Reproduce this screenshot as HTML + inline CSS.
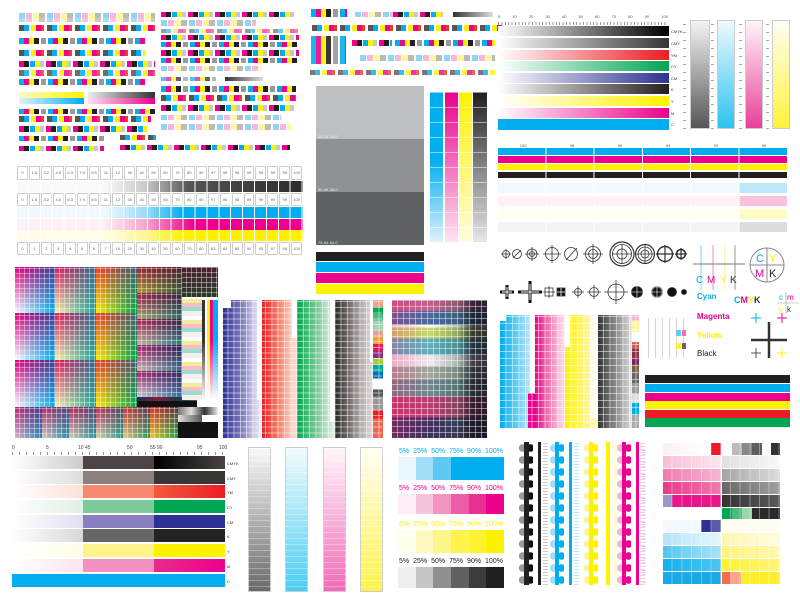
<!DOCTYPE html>
<html><head><meta charset="utf-8">
<style>
*{margin:0;padding:0;box-sizing:border-box}
body{width:800px;height:600px;background:#fff;position:relative;overflow:hidden;font-family:"Liberation Sans",sans-serif}
.a{position:absolute}
.s1{background:repeating-linear-gradient(90deg,#00aeef 0 5px,#ec008c 5px 10px,#fff200 10px 15px,#231f20 15px 20px,#fff 20px 22px,#9a9a9a 22px 27px,#fff 27px 29px)}
.s2{background:repeating-linear-gradient(90deg,#ec008c 0 5px,#231f20 5px 10px,#fff 10px 11px,#00aeef 11px 16px,#fff200 16px 21px,#c8c8c8 21px 25px,#fff 25px 27px)}
.s3{background:repeating-linear-gradient(90deg,#555 0 5px,#00aeef 5px 10px,#fff 10px 12px,#fff200 12px 17px,#ec008c 17px 22px,#ef3e23 22px 25px,#fff 25px 28px)}
.s4{background:repeating-linear-gradient(90deg,#8fd5f5 0 6px,#fff 6px 7px,#f8b7d6 7px 13px,#fff 13px 14px,#fff799 14px 20px,#bbb 20px 26px,#fff 26px 28px)}
.g{background-image:repeating-linear-gradient(90deg,transparent 0 4px,rgba(255,255,255,.45) 4px 5px),repeating-linear-gradient(0deg,transparent 0 4px,rgba(255,255,255,.45) 4px 5px)}
.t{position:absolute;overflow:hidden}
.t>i{position:absolute;inset:0;-webkit-mask-image:linear-gradient(to bottom,#000,transparent);mask-image:linear-gradient(to bottom,#000,transparent)}
.t>b{position:absolute;inset:0;background-image:repeating-linear-gradient(90deg,transparent 0 4px,rgba(255,255,255,.4) 4px 5px),repeating-linear-gradient(0deg,transparent 0 4px,rgba(255,255,255,.4) 4px 5px)}
.lbl{position:absolute;font-size:5px;color:#333}
.row{position:absolute;display:flex}
.row span{flex:1;border:1px solid #ccc;border-radius:1px;margin-right:1px;font-size:4px;color:#666;text-align:center;line-height:11px;background:#fff}
.pt{position:absolute;font-size:7px;display:flex;width:104px;justify-content:space-between}
</style></head><body>

<div class="a s4" style="left:19px;top:13px;width:136px;height:5px"></div>
<div class="a s4" style="left:19px;top:18px;width:136px;height:4px;opacity:.8"></div>
<div class="a s3" style="left:19px;top:25px;width:136px;height:6px"></div>
<div class="a s1" style="left:19px;top:38px;width:126px;height:6px"></div>
<div class="a s3" style="left:19px;top:50px;width:126px;height:6px"></div>
<div class="a s2" style="left:19px;top:61px;width:136px;height:6px"></div>
<div class="a s3" style="left:19px;top:70px;width:136px;height:6px;opacity:.85"></div>
<div class="a s1" style="left:19px;top:79px;width:126px;height:6px"></div>
<div class="a" style="left:19px;top:92px;width:65px;height:6px;background:linear-gradient(90deg,#fff9c4,#fff200)"></div>
<div class="a" style="left:88px;top:92px;width:67px;height:6px;background:linear-gradient(90deg,#eee,#333)"></div>
<div class="a" style="left:19px;top:98px;width:65px;height:6px;background:linear-gradient(90deg,#e0f4fc,#00aeef)"></div>
<div class="a" style="left:88px;top:98px;width:67px;height:6px;background:linear-gradient(90deg,#fde0ee,#ec008c)"></div>
<div class="a s1" style="left:19px;top:109px;width:136px;height:5px"></div>
<div class="a s3" style="left:19px;top:116px;width:132px;height:6px"></div>
<div class="a s2" style="left:19px;top:126px;width:128px;height:6px"></div>
<div class="a s1" style="left:19px;top:136px;width:85px;height:5px"></div>
<div class="a s2" style="left:19px;top:146px;width:85px;height:5px"></div>
<div class="a s3" style="left:120px;top:135px;width:36px;height:5px"></div>
<div class="a s2" style="left:120px;top:145px;width:170px;height:5px"></div>

<div class="a s2" style="left:161px;top:12px;width:134px;height:5px"></div>
<div class="a s4" style="left:161px;top:20px;width:95px;height:6px"></div>
<div class="a s3" style="left:161px;top:29px;width:138px;height:4px;opacity:.6"></div>
<div class="a s2" style="left:161px;top:35px;width:138px;height:5px"></div>
<div class="a s1" style="left:161px;top:42px;width:138px;height:5px"></div>
<div class="a s2" style="left:161px;top:50px;width:138px;height:6px"></div>
<div class="a s1" style="left:161px;top:58px;width:138px;height:5px"></div>
<div class="a s4" style="left:161px;top:66px;width:100px;height:5px"></div>
<div class="a" style="left:225px;top:77px;width:38px;height:4px;background:linear-gradient(90deg,#333,#ddd)"></div>
<div class="a s1" style="left:161px;top:77px;width:55px;height:4px;opacity:.7"></div>
<div class="a s1" style="left:161px;top:86px;width:135px;height:6px"></div>
<div class="a s3" style="left:161px;top:95px;width:135px;height:6px"></div>
<div class="a s2" style="left:161px;top:105px;width:135px;height:6px"></div>
<div class="a s4" style="left:161px;top:115px;width:120px;height:5px"></div>
<div class="a s4" style="left:161px;top:124px;width:130px;height:6px"></div>

<div class="a s1" style="left:311px;top:9px;width:36px;height:8px"></div>
<div class="a s4" style="left:355px;top:12px;width:38px;height:5px"></div>
<div class="a s2" style="left:393px;top:12px;width:50px;height:5px"></div>
<div class="a" style="left:453px;top:12px;width:40px;height:5px;background:linear-gradient(90deg,#333,#ddd)"></div>
<div class="a s3" style="left:312px;top:25px;width:190px;height:6px"></div>
<div class="a s1" style="left:311px;top:36px;width:35px;height:28px;opacity:.9"></div>
<div class="a s2" style="left:352px;top:40px;width:40px;height:6px"></div>
<div class="a s1" style="left:395px;top:40px;width:100px;height:6px"></div>
<div class="a s4" style="left:360px;top:55px;width:135px;height:6px"></div>
<div class="a s3" style="left:310px;top:70px;width:185px;height:5px;opacity:.8"></div>

<div class="a" style="left:316px;top:86px;width:108px;height:53px;background:#bebfc0"></div>
<div class="a" style="left:316px;top:139px;width:108px;height:53px;background:#8f9192"></div>
<div class="a" style="left:316px;top:192px;width:108px;height:53px;background:#5e6263"></div>
<div class="lbl" style="left:318px;top:134px;color:#eee;font-size:4px">25-19-19-0</div>
<div class="lbl" style="left:318px;top:187px;color:#eee;font-size:4px">50-39-38-0</div>
<div class="lbl" style="left:318px;top:240px;color:#eee;font-size:4px">75-64-64-0</div>
<div class="a" style="left:316px;top:252px;width:108px;height:9px;background:#231f20"></div>
<div class="a" style="left:316px;top:262px;width:108px;height:10px;background:#00aeef"></div>
<div class="a" style="left:316px;top:273px;width:108px;height:10px;background:#ec008c"></div>
<div class="a" style="left:316px;top:284px;width:108px;height:10px;background:#fff200"></div>

<div class="a" style="left:430px;top:92px;width:13px;height:150px;background:linear-gradient(#00aeef 0 45%,#dff3fc)"></div>
<div class="a" style="left:445px;top:92px;width:13px;height:150px;background:linear-gradient(#ec008c,#fde5f0)"></div>
<div class="a" style="left:459px;top:92px;width:13px;height:150px;background:linear-gradient(#fff200,#fffce0)"></div>
<div class="a" style="left:473px;top:92px;width:14px;height:150px;background:linear-gradient(#231f20,#e6e7e8)"></div>
<div class="a g" style="left:430px;top:92px;width:57px;height:150px;background-size:57px 15px;background-image:repeating-linear-gradient(0deg,transparent 0 14px,rgba(255,255,255,.5) 14px 15px)"></div>

<div class="a" style="left:498px;top:14px;width:170px;height:8px;font-size:4px;color:#555;display:flex;justify-content:space-between"><span>0</span><span>10</span><span>20</span><span>30</span><span>40</span><span>50</span><span>60</span><span>70</span><span>80</span><span>90</span><span>100</span></div>
<div class="a" style="left:498px;top:22px;width:170px;height:3px;background:repeating-linear-gradient(90deg,#999 0 1px,transparent 1px 3.4px)"></div>
<div class="a" style="left:498px;top:26px;width:171px;height:10px;background:linear-gradient(90deg,#fff,#000)"></div>
<div class="a" style="left:498px;top:38px;width:171px;height:10px;background:linear-gradient(90deg,#fff,#3a3535)"></div>
<div class="a" style="left:498px;top:50px;width:171px;height:10px;background:linear-gradient(90deg,#fff,#ed1c24)"></div>
<div class="a" style="left:498px;top:61px;width:171px;height:10px;background:linear-gradient(90deg,#fff,#00a651)"></div>
<div class="a" style="left:498px;top:73px;width:171px;height:10px;background:linear-gradient(90deg,#fff,#2e3192)"></div>
<div class="a" style="left:498px;top:84px;width:171px;height:10px;background:linear-gradient(90deg,#fff,#231f20)"></div>
<div class="a" style="left:498px;top:96px;width:171px;height:10px;background:linear-gradient(90deg,#fff,#fff200)"></div>
<div class="a" style="left:498px;top:108px;width:171px;height:10px;background:linear-gradient(90deg,#fff,#ec008c)"></div>
<div class="a" style="left:498px;top:119px;width:171px;height:11px;background:#00aeef"></div>
<div class="lbl" style="left:671px;top:29px;font-size:4px">CMYK</div>
<div class="lbl" style="left:671px;top:41px;font-size:4px">CMY</div>
<div class="lbl" style="left:671px;top:53px;font-size:4px">YM</div>
<div class="lbl" style="left:671px;top:64px;font-size:4px">CY</div>
<div class="lbl" style="left:671px;top:76px;font-size:4px">CM</div>
<div class="lbl" style="left:671px;top:87px;font-size:4px">K</div>
<div class="lbl" style="left:671px;top:99px;font-size:4px">Y</div>
<div class="lbl" style="left:671px;top:111px;font-size:4px">M</div>
<div class="lbl" style="left:671px;top:122px;font-size:4px">C</div>

<div class="a" style="left:690px;top:20px;width:20px;height:109px;border:1px solid #ccc;background:linear-gradient(#f5f5f5,#555)"></div>
<div class="a" style="left:717px;top:20px;width:18px;height:109px;border:1px solid #ccc;background:linear-gradient(#f0fafe,#2cc3f0)"></div>
<div class="a" style="left:745px;top:20px;width:18px;height:109px;border:1px solid #ccc;background:linear-gradient(#fff5fa,#e8409a)"></div>
<div class="a" style="left:772px;top:20px;width:18px;height:109px;border:1px solid #ccc;background:linear-gradient(#fffef5,#fff23a)"></div>
<div class="a" style="left:683px;top:20px;width:3px;height:109px;background:repeating-linear-gradient(0deg,#aaa 0 1px,transparent 1px 8px)"></div>
<div class="a" style="left:711px;top:20px;width:3px;height:109px;background:repeating-linear-gradient(0deg,#aaa 0 1px,transparent 1px 8px)"></div>
<div class="a" style="left:739px;top:20px;width:3px;height:109px;background:repeating-linear-gradient(0deg,#aaa 0 1px,transparent 1px 8px)"></div>
<div class="a" style="left:766px;top:20px;width:3px;height:109px;background:repeating-linear-gradient(0deg,#aaa 0 1px,transparent 1px 8px)"></div>

<div class="a" style="left:498px;top:143px;width:290px;height:5px;font-size:4px;color:#555;display:flex;justify-content:space-around"><span>100</span><span>98</span><span>96</span><span>94</span><span>92</span><span>90</span></div>
<div class="a" style="left:498px;top:148px;width:290px;height:30px;background:linear-gradient(#00aeef 0 7px,#fff 7px 8px,#ec008c 8px 15px,#fff 15px 16px,#fff200 16px 22px,#fff 22px 24px,#231f20 24px 30px)"></div>
<div class="a" style="left:498px;top:148px;width:290px;height:30px;background:repeating-linear-gradient(90deg,transparent 0 47.3px,#fff 47.3px 48.3px)"></div>
<div class="a" style="left:498px;top:183px;width:290px;height:10px;background:linear-gradient(90deg,#f3fafd 0 83%,#bfe7fa 83%)"></div>
<div class="a" style="left:498px;top:196px;width:290px;height:10px;background:linear-gradient(90deg,#fdf1f6 0 83%,#f8c2dc 83%)"></div>
<div class="a" style="left:498px;top:209px;width:290px;height:10px;background:linear-gradient(90deg,#fefef1 0 83%,#fffbc4 83%)"></div>
<div class="a" style="left:498px;top:222px;width:290px;height:10px;background:linear-gradient(90deg,#f4f4f4 0 83%,#dcdcdc 83%)"></div>
<div class="a" style="left:498px;top:183px;width:290px;height:49px;background:repeating-linear-gradient(90deg,transparent 0 47.3px,#fff 47.3px 48.3px)"></div>

<svg class="a" style="left:495px;top:238px" width="200" height="70" viewBox="495 238 200 70" fill="none" stroke="#333" stroke-width=".8">
<circle cx="506" cy="254" r="3.5"/><path d="M501 254h10M506 249v10"/>
<circle cx="517" cy="254" r="4.5"/><path d="M513 258l8-8"/>
<circle cx="532" cy="254" r="5"/><circle cx="532" cy="254" r="2.5"/><path d="M525 254h14M532 247v14"/>
<circle cx="552" cy="254" r="6.5"/><path d="M543 254h18M552 245v18"/>
<circle cx="571" cy="254" r="6.5"/><path d="M566 260l11-12"/>
<circle cx="593" cy="254" r="7.5"/><circle cx="593" cy="254" r="4.5"/><path d="M583 254h20M593 244v20"/>
<circle cx="622" cy="254" r="12" stroke-width="1.2"/><circle cx="622" cy="254" r="9.5"/><circle cx="622" cy="254" r="5"/><path d="M612 254h20M622 244v20"/>
<circle cx="645" cy="254" r="9.5" stroke-width="1.2"/><circle cx="645" cy="254" r="7"/><circle cx="645" cy="254" r="4"/><path d="M636 254h18M645 245v18"/>
<circle cx="665" cy="254" r="7.5" stroke-width="1.4"/><path d="M656 254h18M665 245v18" stroke-width="1.2"/>
<circle cx="681" cy="254" r="4.5" stroke-width="1.6"/><path d="M675 254h12M681 248v12" stroke-width="1.2"/>
<path d="M500 292h14M507 285v14" stroke="#111" stroke-width="3"/><path d="M502 292h10M507 287v10" stroke="#fff" stroke-width="1"/>
<path d="M518 292h24M530 281v22" stroke="#111" stroke-width="3"/><path d="M521 292h18M530 284v16" stroke="#fff" stroke-width="1"/>
<rect x="545" y="288" width="8" height="8"/><path d="M543 292h12M549 286v12"/>
<rect x="557" y="288" width="8" height="8" fill="#111"/><path d="M557 292h8M561 288v8" stroke="#fff"/>
<circle cx="578" cy="292" r="3.5"/><path d="M572 292h12M578 286v12"/>
<circle cx="594" cy="292" r="4.5"/><path d="M587 292h14M594 285v14"/>
<circle cx="616" cy="292" r="8"/><path d="M604 292h24M616 280v24"/>
<circle cx="637" cy="292" r="5.5" fill="#111"/><path d="M630 292h14M637 285v14" stroke="#fff" stroke-width=".6"/>
<circle cx="657" cy="292" r="6" fill="#999" stroke="none"/><circle cx="657" cy="292" r="4.5" fill="#111"/><path d="M650 292h14M657 285v14" stroke="#fff" stroke-width=".6"/>
<circle cx="672" cy="292" r="4.5" fill="#111"/>
<circle cx="684" cy="292" r="2.5" fill="#111"/>
</svg>

<svg class="a" style="left:693px;top:240px" width="107" height="120" viewBox="0 0 107 120" fill="none">
<path d="M8 5v45" stroke="#7fd3f5"/><path d="M20 5v45" stroke="#f58bc2"/><path d="M32 5v45" stroke="#fff57a"/><path d="M42 5v45" stroke="#999"/><path d="M0 24h52" stroke="#777"/>
<text x="3" y="43" font-size="10" fill="#00aeef" font-family="Liberation Sans">C</text><text x="14" y="43" font-size="10" fill="#ec008c" font-family="Liberation Sans">M</text><text x="27" y="43" font-size="10" fill="#fff200" font-family="Liberation Sans">Y</text><text x="37" y="43" font-size="10" fill="#333" font-family="Liberation Sans">K</text>
<circle cx="74" cy="25" r="17" stroke="#888"/><path d="M57 25h34M74 8v34" stroke="#888"/>
<text x="63" y="22" font-size="11" fill="#00aeef" font-family="Liberation Sans">C</text><text x="76" y="22" font-size="11" fill="#fff200" font-family="Liberation Sans">Y</text><text x="62" y="37" font-size="11" fill="#ec008c" font-family="Liberation Sans">M</text><text x="76" y="37" font-size="11" fill="#222" font-family="Liberation Sans">K</text>
<text x="41" y="63" font-size="9" font-weight="bold" font-family="Liberation Sans"><tspan fill="#00aeef">C</tspan><tspan fill="#ec008c">M</tspan><tspan fill="#fff200">Y</tspan><tspan fill="#333">K</tspan></text>
<text x="86" y="60" font-size="8" fill="#00aeef" font-family="Liberation Sans">c</text><text x="94" y="60" font-size="8" fill="#ec008c" font-family="Liberation Sans">m</text><text x="86" y="72" font-size="8" fill="#fff200" font-family="Liberation Sans">y</text><text x="94" y="72" font-size="8" fill="#333" font-family="Liberation Sans">k</text>
<path d="M84 63h22M93 52v22" stroke="#999" stroke-width=".6"/>
<path d="M58 100h36M76 82v36" stroke="#333" stroke-width="2.5"/>
<path d="M58 78h10M63 73v10" stroke="#00aeef"/><path d="M84 78h10M89 73v10" stroke="#ec008c"/>
<path d="M58 113h10M63 108v10" stroke="#555"/><path d="M84 113h10M89 108v10" stroke="#fff200"/>
</svg>
<div class="a" style="left:697px;top:292px;font-size:8px;color:#00aeef;font-weight:bold">Cyan</div>
<div class="a" style="left:697px;top:312px;font-size:8px;color:#ec008c;font-weight:bold">Magenta</div>
<div class="a" style="left:697px;top:331px;font-size:8px;color:#fff200;font-weight:bold">Yellow</div>
<div class="a" style="left:697px;top:349px;font-size:8px;color:#222">Black</div>
<div class="a" style="left:648px;top:318px;width:40px;height:40px;background:repeating-linear-gradient(90deg,#aaa 0 1px,transparent 1px 7px);opacity:.5"></div>
<div class="a" style="left:676px;top:330px;width:5px;height:6px;background:#5fcff5"></div><div class="a" style="left:682px;top:330px;width:4px;height:6px;background:#f06eb4"></div>
<div class="a" style="left:676px;top:343px;width:5px;height:6px;background:#fff23a"></div><div class="a" style="left:682px;top:343px;width:4px;height:6px;background:#666"></div>

<div class="row" style="left:17px;top:166px;width:286px;height:14px"><span>0</span><span>1.6</span><span>3.2</span><span>4.8</span><span>6.3</span><span>7.9</span><span>9.5</span><span>11</span><span>12</span><span>30</span><span>40</span><span>50</span><span>60</span><span>70</span><span>80</span><span>90</span><span>97</span><span>96</span><span>98</span><span>99</span><span>99</span><span>99</span><span>99</span><span>100</span></div>
<div class="a" style="left:17px;top:181px;width:286px;height:11px;background:linear-gradient(90deg,#fafafa 0 30%,#c9c9c9 45%,#555 60%,#2c2c2c)"></div>
<div class="row" style="left:17px;top:193px;width:286px;height:13px"><span>0</span><span>1.6</span><span>3.2</span><span>4.8</span><span>6.3</span><span>7.9</span><span>9.5</span><span>11</span><span>12</span><span>30</span><span>40</span><span>50</span><span>60</span><span>70</span><span>80</span><span>90</span><span>97</span><span>96</span><span>98</span><span>99</span><span>99</span><span>99</span><span>99</span><span>100</span></div>
<div class="a" style="left:17px;top:207px;width:286px;height:11px;background:linear-gradient(90deg,#f0fafe 0 30%,#9cdcf6 45%,#00aeef 58%)"></div>
<div class="a" style="left:17px;top:219px;width:286px;height:11px;background:linear-gradient(90deg,#fef0f7 0 30%,#f5a6cd 45%,#ec008c 62%)"></div>
<div class="a" style="left:17px;top:230px;width:286px;height:11px;background:linear-gradient(90deg,#fffde8 0 30%,#fff69b 45%,#fff200 58%)"></div>
<div class="a" style="left:17px;top:181px;width:286px;height:60px;background:repeating-linear-gradient(90deg,transparent 0 10.9px,#fff 10.9px 11.9px)"></div>
<div class="row" style="left:17px;top:242px;width:286px;height:13px"><span>0</span><span>1</span><span>2</span><span>3</span><span>4</span><span>5</span><span>6</span><span>7</span><span>10</span><span>20</span><span>30</span><span>40</span><span>50</span><span>60</span><span>70</span><span>80</span><span>83</span><span>84</span><span>85</span><span>90</span><span>95</span><span>97</span><span>98</span><span>100</span></div>

<div class="t" style="left:15px;top:267px;width:40px;height:46px;background:linear-gradient(90deg,#fff,#00aeef)"><i style="background:linear-gradient(90deg,#e6007e,#3b3f8f)"></i><b></b></div>
<div class="t" style="left:55px;top:267px;width:41px;height:46px;background:linear-gradient(90deg,#fff7b0,#1aa59a)"><i style="background:linear-gradient(90deg,#e8175d,#2f6c8c)"></i><b></b></div>
<div class="t" style="left:96px;top:267px;width:41px;height:46px;background:linear-gradient(90deg,#fff200,#00a651)"><i style="background:linear-gradient(90deg,#ef3e23,#405f6f)"></i><b></b></div>
<div class="t" style="left:15px;top:313px;width:40px;height:47px;background:linear-gradient(90deg,#fff,#00aeef)"><i style="background:linear-gradient(90deg,#e6007e,#3b3f8f)"></i><b></b></div>
<div class="t" style="left:55px;top:313px;width:41px;height:47px;background:linear-gradient(90deg,#fff7b0,#1aa59a)"><i style="background:linear-gradient(90deg,#e8175d,#2f6c8c)"></i><b></b></div>
<div class="t" style="left:96px;top:313px;width:41px;height:47px;background:linear-gradient(90deg,#fff200,#00a651)"><i style="background:linear-gradient(90deg,#ef3e23,#405f6f)"></i><b></b></div>
<div class="t" style="left:15px;top:360px;width:40px;height:47px;background:linear-gradient(90deg,#fff,#00aeef)"><i style="background:linear-gradient(90deg,#e6007e,#3b3f8f)"></i><b></b></div>
<div class="t" style="left:55px;top:360px;width:41px;height:47px;background:linear-gradient(90deg,#fff7b0,#1aa59a)"><i style="background:linear-gradient(90deg,#e8175d,#2f6c8c)"></i><b></b></div>
<div class="t" style="left:96px;top:360px;width:41px;height:47px;background:linear-gradient(90deg,#fff200,#00a651)"><i style="background:linear-gradient(90deg,#ef3e23,#405f6f)"></i><b></b></div>
<div class="t" style="left:137px;top:267px;width:45px;height:26px;background:linear-gradient(90deg,#b5a030,#2f5e3c)"><i style="background:linear-gradient(90deg,#9b1f3a,#4a1f2a)"></i><b></b></div>
<div class="t" style="left:137px;top:293px;width:45px;height:26px;background:linear-gradient(90deg,#a9b070,#2f6c6c)"><i style="background:linear-gradient(90deg,#a0184a,#3a1f3a)"></i><b></b></div>
<div class="t" style="left:137px;top:319px;width:45px;height:26px;background:linear-gradient(90deg,#c0c0a0,#2f7c8c)"><i style="background:linear-gradient(90deg,#b01a5a,#3a2040)"></i><b></b></div>
<div class="t" style="left:137px;top:345px;width:45px;height:26px;background:linear-gradient(90deg,#c8c0b0,#3a6c8c)"><i style="background:linear-gradient(90deg,#a81a6a,#2a2050)"></i><b></b></div>
<div class="t" style="left:137px;top:371px;width:45px;height:26px;background:linear-gradient(90deg,#d0d0d0,#3a6c9c)"><i style="background:linear-gradient(90deg,#a81a6a,#2a2a60)"></i><b></b></div>
<div class="a" style="left:137px;top:397px;width:60px;height:10px;background:linear-gradient(90deg,#1c2a5a,#8a1c3a,#1c3a4a,#556)"></div>
<div class="a" style="left:137px;top:401px;width:60px;height:6px;background:#111"></div>
<div class="t" style="left:182px;top:267px;width:36px;height:30px;background:#2a3a2a"><i style="background:#4a2030"></i><b></b></div>
<div class="a" style="left:182px;top:297px;width:20px;height:103px;background:repeating-linear-gradient(0deg,#f4f0f0 0 5px,#9dc 5px 9px,#fbc 9px 13px,#ee9 13px 17px,#fff 17px 21px)"></div>
<div class="a" style="left:202px;top:300px;width:16px;height:100px;background:linear-gradient(90deg,#333 0 3px,#fff 3px 5px,#fff200 5px 8px,#ec008c 8px 11px,#00aeef 11px 16px)"></div>
<div class="a" style="left:202px;top:340px;width:16px;height:60px;background:linear-gradient(#fff0,#fff)"></div>
<div class="a" style="left:178px;top:407px;width:40px;height:8px;background:linear-gradient(90deg,#777,#ddd,#333,#eee)"></div>
<div class="a" style="left:178px;top:422px;width:40px;height:16px;background:#111"></div>
<div class="t" style="left:15px;top:407px;width:27px;height:31px;background:linear-gradient(90deg,#d6b7c8,#2e87b6)"><i style="background:linear-gradient(90deg,#b72773,#4b3b8b)"></i><b></b></div>
<div class="t" style="left:42px;top:407px;width:27px;height:31px;background:linear-gradient(90deg,#d5cfc0,#2590a8)"><i style="background:linear-gradient(90deg,#b7276b,#4b4b80)"></i><b></b></div>
<div class="t" style="left:69px;top:407px;width:27px;height:31px;background:linear-gradient(90deg,#dcd0b8,#269a9c)"><i style="background:linear-gradient(90deg,#c02060,#4a4a70)"></i><b></b></div>
<div class="t" style="left:96px;top:407px;width:27px;height:31px;background:linear-gradient(90deg,#e0d8b0,#2a9a90)"><i style="background:linear-gradient(90deg,#c02a55,#4a5060)"></i><b></b></div>
<div class="t" style="left:123px;top:407px;width:27px;height:31px;background:linear-gradient(90deg,#e5d080,#2a9a70)"><i style="background:linear-gradient(90deg,#d0303a,#5a4050)"></i><b></b></div>
<div class="t" style="left:150px;top:407px;width:28px;height:31px;background:linear-gradient(90deg,#f0d030,#20a050)"><i style="background:linear-gradient(90deg,#d8302a,#5a3a3a)"></i><b></b></div>
<div class="a" style="left:178px;top:415px;width:24px;height:7px;background:linear-gradient(90deg,#ddd,#555)"></div>

<div class="a" style="left:223px;top:300px;width:38px;height:138px;background:linear-gradient(90deg,#2e3192,#5454a8 25%,#8a88c4 55%,#c9c7e5 80%,#eceaf6)"></div>
<div class="a" style="left:223px;top:300px;width:8px;height:8px;background:#fff"></div>
<div class="a" style="left:257px;top:300px;width:5px;height:100px;background:#fff"></div>
<div class="a" style="left:262px;top:300px;width:35px;height:138px;background:linear-gradient(90deg,#ed1c24,#f15a4a 30%,#f79a86 60%,#fcd9cf 90%)"></div>
<div class="a" style="left:292px;top:300px;width:5px;height:38px;background:#fff"></div>
<div class="a" style="left:297px;top:300px;width:38px;height:138px;background:linear-gradient(90deg,#00a651,#3dba72 25%,#7ecb98 55%,#bfe3c8 80%,#e3f2e6)"></div>
<div class="a" style="left:330px;top:300px;width:5px;height:122px;background:#fff"></div>
<div class="a" style="left:335px;top:300px;width:38px;height:138px;background:linear-gradient(90deg,#2b2b2b,#5c5656 25%,#8c8585 50%,#bdb5b5 75%,#e0dcdc)"></div>
<div class="a" style="left:370px;top:300px;width:3px;height:62px;background:#fff"></div>
<div class="a" style="left:373px;top:300px;width:10px;height:138px;background:linear-gradient(#f6a088 0 5%,#00a651 5% 10%,#4bba7a 10% 15%,#9ad5b0 15% 22%,#e8a090 22% 27%,#f7a030 27% 32%,#ed145b 32% 37%,#92278f 37% 42%,#a6ce39 42% 47%,#00a99d 47% 52%,#0072bc 52% 57%,#fff 57% 65%,#555 65% 70%,#999 70% 80%,#ed1c24 80% 86%,#ef6650 86%)"></div>
<div class="a" style="left:222px;top:300px;width:160px;height:138px;background:repeating-linear-gradient(0deg,transparent 0 4.7px,rgba(255,255,255,.5) 4.7px 5.7px),repeating-linear-gradient(90deg,transparent 0 5.3px,rgba(255,255,255,.5) 5.3px 6.3px)"></div>

<div class="a" style="left:392px;top:300px;width:95px;height:138px;background:linear-gradient(180deg,#c06090 0 8%,#4a6aa0 8% 18%,#fff 18% 20%,#c8d870 20% 28%,#60b0c0 28% 40%,#f0e8f0 40% 48%,#a0a8a0 48% 58%,#708890 58% 70%,#b84070 70% 85%,#403060 85%)"></div>
<div class="a" style="left:392px;top:300px;width:95px;height:138px;background:linear-gradient(90deg,rgba(230,30,90,.3),rgba(0,0,0,0) 40%,rgba(40,80,60,.35) 70%,rgba(20,20,30,.8) 85%,rgba(20,20,30,.85))"></div>
<div class="a" style="left:392px;top:300px;width:95px;height:138px;background:repeating-linear-gradient(0deg,transparent 0 5px,rgba(255,255,255,.45) 5px 6px),repeating-linear-gradient(90deg,transparent 0 5px,rgba(255,255,255,.45) 5px 6px)"></div>

<div class="a" style="left:500px;top:315px;width:36px;height:113px;background:linear-gradient(90deg,#00aeef,#55c8f2 40%,#a8e0f8 75%,#e5f6fd)"></div>
<div class="a" style="left:500px;top:315px;width:6px;height:6px;background:#fff"></div>
<div class="a" style="left:530px;top:315px;width:6px;height:78px;background:#fff"></div>
<div class="a" style="left:528px;top:393px;width:7px;height:35px;background:#ec008c"></div>
<div class="a" style="left:535px;top:315px;width:30px;height:113px;background:linear-gradient(90deg,#ec008c,#f06cac 40%,#f7b5d6 75%,#fde3ef)"></div>
<div class="a" style="left:565px;top:315px;width:33px;height:113px;background:linear-gradient(90deg,#fff200,#fff46b 50%,#fff9c0)"></div>
<div class="a" style="left:565px;top:315px;width:5px;height:32px;background:#fff"></div>
<div class="a" style="left:590px;top:315px;width:8px;height:104px;background:linear-gradient(90deg,#fffce0,#fff)"></div>
<div class="a" style="left:598px;top:315px;width:34px;height:113px;background:linear-gradient(90deg,#333,#666 30%,#999 60%,#ccc 90%,#eee)"></div>
<div class="a" style="left:632px;top:315px;width:7px;height:113px;background:linear-gradient(#f7b5d6 0 5%,#fff5a0 5% 15%,#fff 15% 24%,#d06050 24% 30%,#8a3040 30% 38%,#7a2060 38% 44%,#7a6040 44% 50%,#666 50% 60%,#999 60% 70%,#ddd 70% 78%,#00aeef 78% 88%,#aaa 88%)"></div>
<div class="a" style="left:500px;top:315px;width:139px;height:113px;background:repeating-linear-gradient(0deg,transparent 0 6px,rgba(255,255,255,.5) 6px 7px),repeating-linear-gradient(90deg,transparent 0 5.5px,rgba(255,255,255,.5) 5.5px 6.5px)"></div>

<div class="a" style="left:645px;top:375px;width:145px;height:8px;background:#231f20"></div>
<div class="a" style="left:645px;top:384px;width:145px;height:8px;background:#00aeef"></div>
<div class="a" style="left:645px;top:393px;width:145px;height:8px;background:#ec008c"></div>
<div class="a" style="left:645px;top:401px;width:145px;height:8px;background:#fff200"></div>
<div class="a" style="left:645px;top:410px;width:145px;height:8px;background:#ed1c24"></div>
<div class="a" style="left:645px;top:418px;width:145px;height:9px;background:#00a651"></div>

<div class="a" style="left:12px;top:445px;width:213px;font-size:5px;color:#444">
<span class="a" style="left:0">0</span><span class="a" style="left:34px">5</span><span class="a" style="left:66px">10 45</span><span class="a" style="left:115px">50</span><span class="a" style="left:138px">55 90</span><span class="a" style="left:185px">95</span><span class="a" style="left:207px">100</span></div>
<div class="a" style="left:12px;top:452px;width:213px;height:3px;background:repeating-linear-gradient(90deg,#999 0 1px,transparent 1px 7px)"></div>
<div class="a" style="left:12px;top:456px;width:213px;height:13px;background:linear-gradient(90deg,#fff,#ccc 71px,#4d4545 71px 142px,#000 142px,#4a4444)"></div>
<div class="a" style="left:12px;top:471px;width:213px;height:13px;background:linear-gradient(90deg,#fff,#ddd 71px,#8c807d 71px 142px,#3a3636 142px)"></div>
<div class="a" style="left:12px;top:485px;width:213px;height:13px;background:linear-gradient(90deg,#fff,#fde0d8 71px,#f58a6f 71px 142px,#f05a40 142px,#ed1c24)"></div>
<div class="a" style="left:12px;top:500px;width:213px;height:13px;background:linear-gradient(90deg,#fff,#e0efe4 71px,#7fca9a 71px 142px,#00a651 142px)"></div>
<div class="a" style="left:12px;top:515px;width:213px;height:13px;background:linear-gradient(90deg,#fff,#e0dff0 71px,#8a80c0 71px 142px,#2e3192 142px)"></div>
<div class="a" style="left:12px;top:529px;width:213px;height:13px;background:linear-gradient(90deg,#fff,#d8d8d8 71px,#666 71px 142px,#222 142px)"></div>
<div class="a" style="left:12px;top:544px;width:213px;height:13px;background:linear-gradient(90deg,#fff,#fffce8 71px,#fff48a 71px 142px,#fff200 142px)"></div>
<div class="a" style="left:12px;top:559px;width:213px;height:13px;background:linear-gradient(90deg,#fff,#fce4ef 71px,#f290c0 71px 142px,#e92a8c 142px,#ec008c)"></div>
<div class="a" style="left:12px;top:574px;width:213px;height:13px;background:#00aeef"></div>
<div class="lbl" style="left:227px;top:461px;font-size:4px">CMYK</div>
<div class="lbl" style="left:227px;top:476px;font-size:4px">CMY</div>
<div class="lbl" style="left:227px;top:490px;font-size:4px">YM</div>
<div class="lbl" style="left:227px;top:505px;font-size:4px">CY</div>
<div class="lbl" style="left:227px;top:520px;font-size:4px">CM</div>
<div class="lbl" style="left:227px;top:534px;font-size:4px">K</div>
<div class="lbl" style="left:227px;top:549px;font-size:4px">Y</div>
<div class="lbl" style="left:227px;top:564px;font-size:4px">M</div>
<div class="lbl" style="left:227px;top:579px;font-size:4px">C</div>

<div class="a" style="left:248px;top:447px;width:23px;height:145px;border:1px solid #ccc;background:linear-gradient(#fafafa,#6a6a6a)"></div>
<div class="a" style="left:285px;top:447px;width:23px;height:145px;border:1px solid #ccc;background:linear-gradient(#f2fbfe,#4ccdf2)"></div>
<div class="a" style="left:323px;top:447px;width:23px;height:145px;border:1px solid #ccc;background:linear-gradient(#fff6fa,#f26cb8)"></div>
<div class="a" style="left:360px;top:447px;width:23px;height:145px;border:1px solid #ccc;background:linear-gradient(#fffef6,#fff34a)"></div>
<div class="a" style="left:248px;top:447px;width:135px;height:145px;background:repeating-linear-gradient(0deg,transparent 0 5px,rgba(255,255,255,.3) 5px 6px)"></div>

<div class="pt" style="left:399px;top:448px;color:#00aeef"><span>5%</span><span>25%</span><span>50%</span><span>75%</span><span>90%</span><span>100%</span></div>
<div class="a" style="left:398px;top:457px;width:106px;height:23px;background:linear-gradient(90deg,#eaf7fd 0 17%,#a3ddf7 17% 33%,#5ecaf3 33% 50%,#00aeef 50%)"></div>
<div class="pt" style="left:399px;top:485px;color:#ec008c"><span>5%</span><span>25%</span><span>50%</span><span>75%</span><span>90%</span><span>100%</span></div>
<div class="a" style="left:398px;top:494px;width:106px;height:20px;background:linear-gradient(90deg,#fdeef5 0 17%,#f8c3dc 17% 33%,#f293c0 33% 50%,#ed5da5 50% 67%,#ea2f92 67% 83%,#ec008c 83%)"></div>
<div class="pt" style="left:399px;top:521px;color:#fff200"><span>5%</span><span>25%</span><span>50%</span><span>75%</span><span>90%</span><span>100%</span></div>
<div class="a" style="left:398px;top:530px;width:106px;height:23px;background:linear-gradient(90deg,#fffdeb 0 17%,#fff9c0 17% 33%,#fff68a 33% 50%,#fff34e 50% 67%,#fff330 67% 83%,#fff200 83%)"></div>
<div class="pt" style="left:399px;top:558px;color:#222"><span>5%</span><span>25%</span><span>50%</span><span>75%</span><span>90%</span><span>100%</span></div>
<div class="a" style="left:398px;top:567px;width:106px;height:21px;background:linear-gradient(90deg,#eee 0 17%,#c6c6c6 17% 33%,#8f8f8f 33% 50%,#606060 50% 67%,#3c3c3c 67% 83%,#231f20 83%)"></div>

<div class="a" style="left:519px;top:442px;width:14px;height:143px;background:radial-gradient(circle at 50% 50%,#999 0 3.5px,transparent 4px) 0 0/7px 12px repeat-y,radial-gradient(circle,#111 0 3.5px,transparent 4px) 8px 0/7px 12px repeat-y"></div>
<div class="a" style="left:524px;top:442px;width:5px;height:143px;background:#222"></div>
<div class="a" style="left:538px;top:442px;width:3px;height:143px;background:#222"></div>
<div class="a" style="left:543px;top:442px;width:5px;height:143px;background:repeating-linear-gradient(0deg,#ccc 0 1px,transparent 1px 3px)"></div>
<div class="a" style="left:550px;top:442px;width:14px;height:143px;background:radial-gradient(circle,#9fe0f8 0 3.5px,transparent 4px) 0 0/7px 12px repeat-y,radial-gradient(circle,#00aeef 0 3.5px,transparent 4px) 8px 0/7px 12px repeat-y"></div>
<div class="a" style="left:555px;top:442px;width:4px;height:143px;background:#00aeef"></div>
<div class="a" style="left:569px;top:442px;width:3px;height:143px;background:#00aeef"></div>
<div class="a" style="left:574px;top:442px;width:5px;height:143px;background:repeating-linear-gradient(0deg,#bde9fa 0 1px,transparent 1px 3px)"></div>
<div class="a" style="left:584px;top:442px;width:14px;height:143px;background:radial-gradient(circle,#fff68a 0 3.5px,transparent 4px) 0 0/7px 12px repeat-y,radial-gradient(circle,#fff200 0 3.5px,transparent 4px) 8px 0/7px 12px repeat-y"></div>
<div class="a" style="left:589px;top:442px;width:4px;height:143px;background:#fff200"></div>
<div class="a" style="left:606px;top:442px;width:4px;height:143px;background:#fff200"></div>
<div class="a" style="left:612px;top:442px;width:5px;height:143px;background:repeating-linear-gradient(0deg,#fffbc0 0 1px,transparent 1px 3px)"></div>
<div class="a" style="left:617px;top:442px;width:14px;height:143px;background:radial-gradient(circle,#f7b5d6 0 3.5px,transparent 4px) 0 0/7px 12px repeat-y,radial-gradient(circle,#ec008c 0 3.5px,transparent 4px) 8px 0/7px 12px repeat-y"></div>
<div class="a" style="left:622px;top:442px;width:4px;height:143px;background:#ec008c"></div>
<div class="a" style="left:636px;top:442px;width:3px;height:143px;background:#ec008c"></div>
<div class="a" style="left:640px;top:442px;width:5px;height:143px;background:repeating-linear-gradient(0deg,#f9c7df 0 1px,transparent 1px 3px)"></div>

<div class="a" style="left:663px;top:443px;width:48px;height:12px;background:linear-gradient(90deg,#fdf0f5,#fff)"></div>
<div class="a" style="left:711px;top:443px;width:10px;height:12px;background:#ed1c24"></div>
<div class="a" style="left:732px;top:443px;width:10px;height:12px;background:#bbb"></div>
<div class="a" style="left:742px;top:443px;width:10px;height:12px;background:#888"></div>
<div class="a" style="left:752px;top:443px;width:10px;height:12px;background:#5a5f5f"></div>
<div class="a" style="left:771px;top:443px;width:9px;height:12px;background:#333"></div>
<div class="a" style="left:663px;top:456px;width:58px;height:12px;background:linear-gradient(90deg,#f7bfd8,#fce6ef)"></div>
<div class="a" style="left:722px;top:456px;width:58px;height:12px;background:linear-gradient(90deg,#e0e0e0,#f8f8f8)"></div>
<div class="a" style="left:663px;top:469px;width:58px;height:12px;background:linear-gradient(90deg,#f07ab0,#f7b6d3)"></div>
<div class="a" style="left:722px;top:469px;width:58px;height:12px;background:linear-gradient(90deg,#a5a5a5,#dcdcdc)"></div>
<div class="a" style="left:663px;top:482px;width:58px;height:12px;background:linear-gradient(90deg,#e8388a,#f07ab0)"></div>
<div class="a" style="left:722px;top:482px;width:58px;height:12px;background:linear-gradient(90deg,#666,#a0a0a0)"></div>
<div class="a" style="left:663px;top:495px;width:9px;height:12px;background:#9996c8"></div>
<div class="a" style="left:672px;top:495px;width:49px;height:12px;background:#e8168a"></div>
<div class="a" style="left:722px;top:495px;width:58px;height:12px;background:linear-gradient(90deg,#333,#5a5a5a)"></div>
<div class="a" style="left:722px;top:508px;width:10px;height:11px;background:#00a651"></div>
<div class="a" style="left:732px;top:508px;width:10px;height:11px;background:#4dbb7c"></div>
<div class="a" style="left:742px;top:508px;width:10px;height:11px;background:#9dd5ae"></div>
<div class="a" style="left:752px;top:508px;width:28px;height:11px;background:#2a2a2a"></div>
<div class="a" style="left:663px;top:520px;width:38px;height:12px;background:#f2f9fe"></div>
<div class="a" style="left:701px;top:520px;width:10px;height:12px;background:#2e3192"></div>
<div class="a" style="left:711px;top:520px;width:10px;height:12px;background:#5b5aa8"></div>
<div class="a" style="left:722px;top:520px;width:58px;height:12px;background:#fffdf0"></div>
<div class="a" style="left:663px;top:533px;width:58px;height:12px;background:linear-gradient(90deg,#b5e3f8,#e6f6fd)"></div>
<div class="a" style="left:722px;top:533px;width:58px;height:12px;background:linear-gradient(90deg,#fff6b0,#fffce0)"></div>
<div class="a" style="left:663px;top:546px;width:58px;height:12px;background:linear-gradient(90deg,#52c5f1,#ace2f8)"></div>
<div class="a" style="left:722px;top:546px;width:58px;height:12px;background:linear-gradient(90deg,#fff37a,#fff8b0)"></div>
<div class="a" style="left:663px;top:559px;width:58px;height:12px;background:linear-gradient(90deg,#0fb0ee,#4dc6f2)"></div>
<div class="a" style="left:722px;top:559px;width:58px;height:12px;background:linear-gradient(90deg,#fff232,#fff67a)"></div>
<div class="a" style="left:663px;top:572px;width:58px;height:12px;background:#1ba8e6"></div>
<div class="a" style="left:722px;top:572px;width:9px;height:12px;background:#f36c4f"></div>
<div class="a" style="left:731px;top:572px;width:10px;height:12px;background:#f8a58c"></div>
<div class="a" style="left:741px;top:572px;width:39px;height:12px;background:#ffec2a"></div>
<div class="a" style="left:663px;top:443px;width:117px;height:141px;background:repeating-linear-gradient(90deg,transparent 0 8.7px,rgba(255,255,255,.35) 8.7px 9.7px)"></div>
<div class="a" style="left:642px;top:443px;width:4px;height:140px;background:repeating-linear-gradient(0deg,#f9c7df 0 1px,transparent 1px 4px)"></div>
</body></html>
